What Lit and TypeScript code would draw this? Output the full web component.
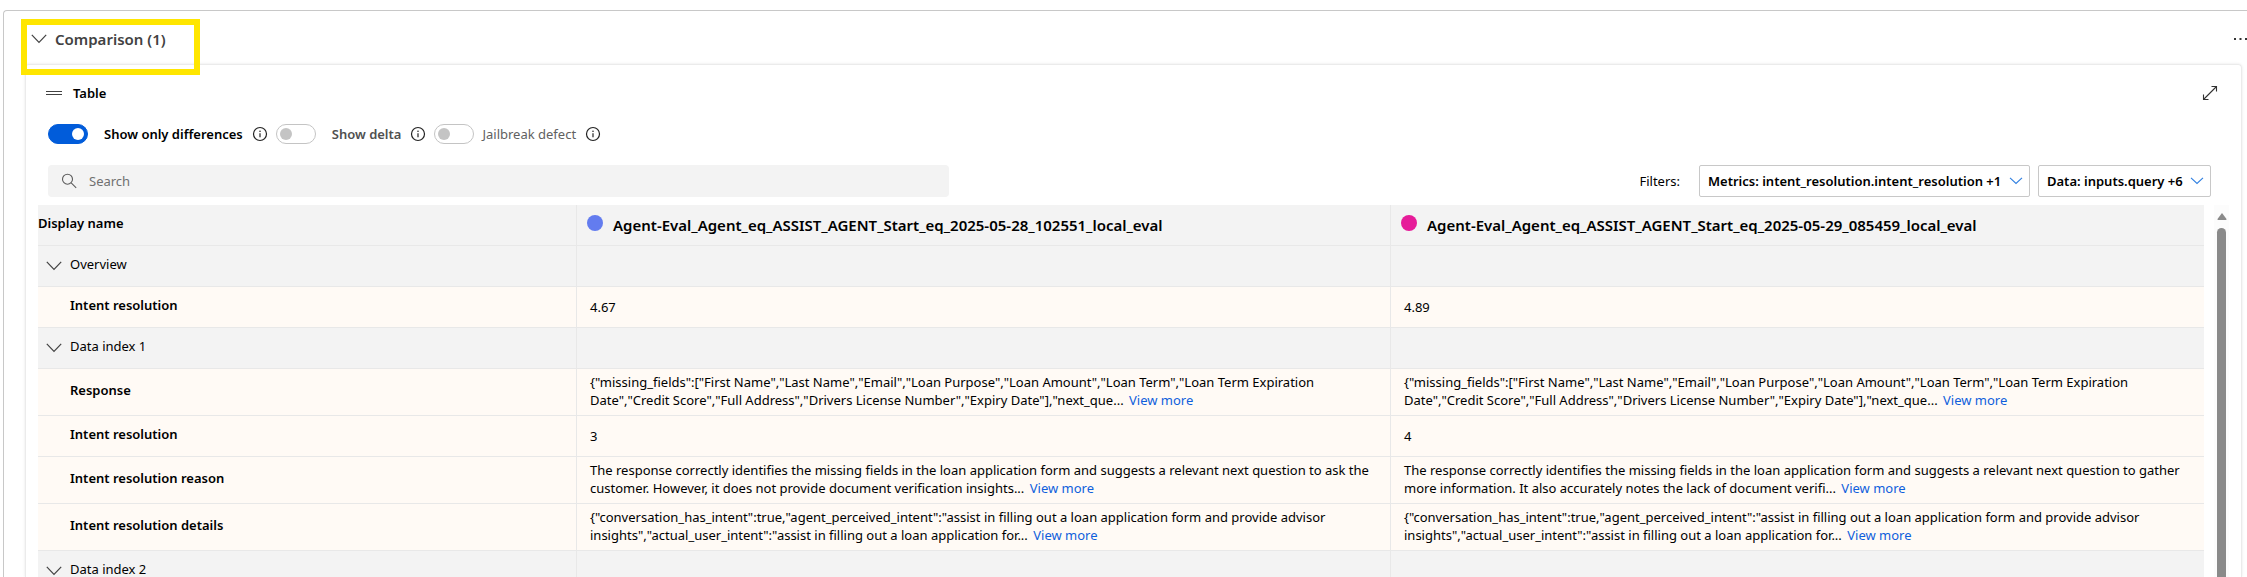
import { LitElement, html, css, svg, nothing } from "lit";
import { customElement, state } from "lit/decorators.js";

type Cell = { text: string; more?: boolean };
type Row = { label: string; cells: Cell[] };
type Section = { title: string; rows: Row[] };

const RUNS = [
  { name: "Agent-Eval_Agent_eq_ASSIST_AGENT_Start_eq_2025-05-28_102551_local_eval", tone: "blue" },
  { name: "Agent-Eval_Agent_eq_ASSIST_AGENT_Start_eq_2025-05-29_085459_local_eval", tone: "pink" },
];

const MISSING =
  '{"missing_fields":["First Name","Last Name","Email","Loan Purpose","Loan Amount","Loan Term","Loan Term Expiration Date","Credit Score","Full Address","Drivers License Number","Expiry Date"],"next_que...';
const INTENT =
  '{"conversation_has_intent":true,"agent_perceived_intent":"assist in filling out a loan application form and provide advisor insights","actual_user_intent":"assist in filling out a loan application for...';

const SECTIONS: Section[] = [
  {
    title: "Overview",
    rows: [{ label: "Intent resolution", cells: [{ text: "4.67" }, { text: "4.89" }] }],
  },
  {
    title: "Data index 1",
    rows: [
      { label: "Response", cells: [{ text: MISSING, more: true }, { text: MISSING, more: true }] },
      { label: "Intent resolution", cells: [{ text: "3" }, { text: "4" }] },
      {
        label: "Intent resolution reason",
        cells: [
          {
            text: "The response correctly identifies the missing fields in the loan application form and suggests a relevant next question to ask the customer. However, it does not provide document verification insights...",
            more: true,
          },
          {
            text: "The response correctly identifies the missing fields in the loan application form and suggests a relevant next question to gather more information. It also accurately notes the lack of document verifi...",
            more: true,
          },
        ],
      },
      {
        label: "Intent resolution details",
        cells: [{ text: INTENT, more: true }, { text: INTENT, more: true }],
      },
    ],
  },
  { title: "Data index 2", rows: [] },
];

const chevron = svg`<svg class="icon" width="16" height="16" viewBox="0 0 16 16" aria-hidden="true"><path d="M.8 3.800 8 11.400l7.200-7.600" fill="none" stroke="currentColor" stroke-width="1.200"/></svg>`;
const smallChevron = svg`<svg class="chev" width="14" height="14" viewBox="0 0 14 14" aria-hidden="true"><path d="M1 3.800 7 9.500l6-5.700" fill="none" stroke="currentColor" stroke-width="1.100"/></svg>`;
const info = svg`<svg width="16" height="16" viewBox="0 0 16 16" aria-hidden="true"><circle cx="8" cy="8" r="6.500" fill="none" stroke="currentColor" stroke-width="1.200"/><path d="M8 7.200v4" stroke="currentColor" stroke-width="1.200"/><circle cx="8" cy="5.200" r=".8" fill="currentColor"/></svg>`;

@customElement("app-root")
export class AppRoot extends LitElement {
  @state() private onlyDifferences = true;

  static styles = css`
    :host {
      display: block;
      box-sizing: border-box;
      height: 100vh;
      overflow: hidden;
      padding: 10px 0 0 3px;
      background: #fff;
      color: #000;
      font: 13px/18px "Noto Sans", "Open Sans", sans-serif;
    }
    *, *::before { box-sizing: border-box; }
    button, input, select { font: inherit; color: inherit; margin: 0; }
    button { border: 0; padding: 0; background: none; display: inline-flex; cursor: pointer; }
    svg { display: block; flex: none; }
    .panel {
      display: flex;
      flex-direction: column;
      height: 100%;
      border: 1px solid #c8c8c8;
      border-width: 1px 0 0 1px;
      border-radius: 4px 0 0 0;
      padding-left: 21px;
    }
    .top { display: flex; flex: none; align-items: center; height: 53px; padding: 0 0 0 6px; position: relative; }
    .mark {
      position: absolute;
      left: -4px;
      top: 8px;
      width: 179px;
      height: 56px;
      border: 6px solid #ffe600;
      pointer-events: none;
    }
    .collapse { align-items: center; gap: 8px; color: #424242; height: 40px; padding-top: 2px; }
    .collapse h2 { margin: 0; font-size: 15px; line-height: 20px; font-weight: 600; }
    .dots { margin-left: auto; color: #333; }
    .card {
      display: flex;
      flex-direction: column;
      flex: 1;
      min-height: 0;
      border: 1px solid #ebebeb;
      border-bottom: 0;
      border-radius: 4px 4px 0 0;
      box-shadow: 0 0 3px #0000001a;
      margin-right: 5px;
      padding: 16px 12px 0;
    }
    .head, .toggles, .tools { flex: none; }
    .head { display: flex; align-items: center; gap: 11px; height: 24px; padding: 0 11px 0 8px; }
    .head h3 { margin: 0; font-size: 13px; line-height: 20px; font-weight: 600; }
    .head button { margin-left: auto; color: #333; }
    .toggles { display: flex; align-items: center; height: 20px; margin-top: 19px; padding-left: 10px; }
    .toggle { display: flex; align-items: center; gap: 16px; font-weight: 600; color: #505050; }
    .toggle.on { color: #000; }
    .toggle.plain { gap: 8px; font-weight: 400; color: #616161; }
    .toggles button { margin: 0 8px 0 9px; color: #222; }
    .switch {
      appearance: none;
      display: flex;
      align-items: center;
      width: 40px;
      height: 20px;
      padding: 0 3px;
      border: 1px solid #c4c4c4;
      border-radius: 10px;
      background: #fff;
    }
    .switch::before { content: ""; width: 12px; height: 12px; border-radius: 50%; background: #c4c4c4; }
    .switch:checked { background: #015cda; border-color: #015cda; justify-content: flex-end; }
    .switch:checked::before { background: #fff; }
    .tools { display: flex; align-items: center; gap: 8px; margin-top: 21px; padding: 0 18px 0 10px; }
    .search {
      display: flex;
      align-items: center;
      gap: 12px;
      flex: 0 1 901px;
      height: 32px;
      margin-right: auto;
      padding: 0 13px;
      border-radius: 4px;
      background: #f3f3f3;
      color: #5c5c5c;
    }
    .search input { flex: 1; border: 0; padding: 0; background: none; outline: 0; }
    .search input::placeholder { color: #707070; opacity: 1; }
    .caption { margin-right: 11px; }
    .drop {
      display: grid;
      align-items: center;
      height: 32px;
      border: 1px solid #c8c8c8;
      border-radius: 2px;
      color: #2f7fe0;
    }
    .drop select {
      grid-area: 1 / 1;
      appearance: none;
      border: 0;
      background: none;
      height: 30px;
      padding: 0 27px 0 8px;
      font-weight: 600;
      color: #000;
    }
    .drop .chev { grid-area: 1 / 1; justify-self: end; margin-right: 6px; pointer-events: none; }
    .body { display: flex; align-items: stretch; gap: 10px; margin-top: 8px; flex: 1; min-height: 0; overflow: hidden; }
    .rows { flex: 1; min-width: 0; min-height: 0; overflow: hidden; }
    table { width: 100%; border-collapse: separate; border-spacing: 0; table-layout: fixed; }
    .name-col { width: 538px; }
    th, td {
      height: 41px;
      padding: 0 12px 0 13px;
      border: 0 solid #e8e8e8;
      border-bottom-width: 1px;
      text-align: left;
      font-weight: 400;
      background: #fffaf5;
      vertical-align: middle;
    }
    th + th, th + td, td + td { border-left-width: 1px; }
    tr.group > * , thead th { background: #f3f3f3; }
    th:first-child { padding: 0 0 4px 32px; font-weight: 600; }
    thead th:first-child { padding-left: 0; }
    tr.group th:first-child { padding-left: 8px; padding-bottom: 0; font-weight: 400; }
    tr.long > * { height: 47px; }
    tr.long td { padding-bottom: 2px; }
    .expander { gap: 8px; align-items: center; }
    .expander .icon { color: #424242; margin-top: 3px; }
    .run { display: flex; align-items: center; gap: 10px; margin-left: -3px; font-size: 15px; line-height: 20px; font-weight: 600; }
    .dot { width: 16px; height: 16px; border-radius: 50%; margin-bottom: 4px; }
    .dot.blue { background: #637cef; }
    .dot.pink { background: #e61c99; }
    a { margin-left: 2px; color: #0f5fdc; text-decoration: none; }
    .bar { width: 15px; background: #fcfcfc; display: flex; flex-direction: column; align-items: center; gap: 8px; padding-top: 8px; }
    .thumb { width: 9px; flex: 1; border-radius: 5px 5px 0 0; background: #8a8a8a; }
  `;

  private cell(c: Cell) {
    return html`<td>${c.text}${c.more ? html` <a href="#more">View more</a>` : nothing}</td>`;
  }

  private section(s: Section) {
    return html`
      <tr class="group">
        <th scope="rowgroup"><button class="expander" aria-expanded="true">${chevron}${s.title}</button></th>
        <td></td>
        <td></td>
      </tr>
      ${s.rows.map(
        (r) => html`<tr class=${r.cells[0].more ? "long" : ""}>
          <th scope="row">${r.label}</th>
          ${r.cells.map((c) => this.cell(c))}
        </tr>`
      )}
    `;
  }

  render() {
    return html`
      <section class="panel">
        <header class="top">
          <button class="collapse" aria-expanded="true">${chevron}<h2>Comparison (1)</h2></button>
          <span class="mark"></span>
          <button class="dots" aria-label="More actions">
            <svg width="14" height="16" viewBox="0 0 14 16"><g fill="currentColor"><rect x="1" y="8" width="2" height="2"/><rect x="6.500" y="8" width="2" height="2"/><rect x="12" y="8" width="2" height="2"/></g></svg>
          </button>
        </header>
        <div class="card">
          <div class="head">
            <svg width="16" height="16" viewBox="0 0 16 16" aria-hidden="true"><path d="M0 6.500h16M0 9.500h16" stroke="#424242"/></svg>
            <h3>Table</h3>
            <button aria-label="Expand">
              <svg width="16" height="16" viewBox="0 0 16 16"><path d="M9.500 1.500h5V6.500M14.500 1.500l-13 13M1.500 9.500v5h5" fill="none" stroke="currentColor" stroke-width="1.100"/></svg>
            </button>
          </div>
          <div class="toggles">
            <label class="toggle ${this.onlyDifferences ? "on" : ""}">
              <input class="switch" type="checkbox" role="switch" .checked=${this.onlyDifferences}
                @change=${(e: Event) => (this.onlyDifferences = (e.target as HTMLInputElement).checked)} />Show only differences
            </label>
            <button aria-label="About differences">${info}</button>
            <label class="toggle"><input class="switch" type="checkbox" role="switch" />Show delta</label>
            <button aria-label="About delta">${info}</button>
            <label class="toggle plain"><input class="switch" type="checkbox" role="switch" />Jailbreak defect</label>
            <button aria-label="About jailbreak defect">${info}</button>
          </div>
          <div class="tools">
            <label class="search">
              <svg width="16" height="16" viewBox="0 0 16 16" aria-hidden="true"><circle cx="6.500" cy="6.200" r="5" fill="none" stroke="currentColor" stroke-width="1.100"/><path d="m10.200 9.800 5 5" stroke="currentColor" stroke-width="1.100"/></svg>
              <input type="search" placeholder="Search" aria-label="Search" />
            </label>
            <span class="caption">Filters:</span>
            <span class="drop"><select aria-label="Metrics filter"><option>Metrics: intent_resolution.intent_resolution +1</option></select>${smallChevron}</span>
            <span class="drop"><select aria-label="Data filter"><option>Data: inputs.query +6</option></select>${smallChevron}</span>
          </div>
          <div class="body">
            <div class="rows">
              <table>
                <colgroup><col class="name-col" /><col /><col /></colgroup>
                <thead>
                  <tr>
                    <th scope="col">Display name</th>
                    ${RUNS.map((r) => html`<th scope="col"><div class="run"><span class="dot ${r.tone}"></span>${r.name}</div></th>`)}
                  </tr>
                </thead>
                <tbody>${SECTIONS.map((s) => this.section(s))}</tbody>
              </table>
            </div>
            <div class="bar" aria-hidden="true">
              <svg width="10" height="7" viewBox="0 0 10 7"><path d="M5 0 9.500 6q.3 1-.7 1H1.200q-1 0-.7-1Z" fill="#8a8a8a"/></svg>
              <div class="thumb"></div>
            </div>
          </div>
        </div>
      </section>
    `;
  }
}
